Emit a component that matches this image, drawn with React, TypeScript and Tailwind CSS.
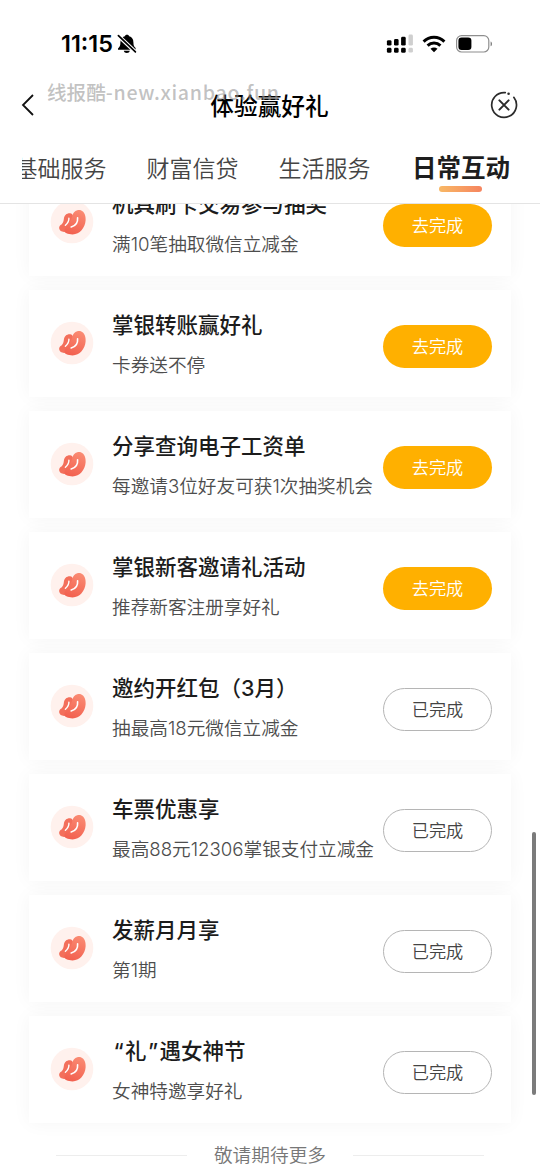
import clsx from "clsx";

const TABS = ["基础服务", "财富信贷", "生活服务"];

const TASKS = [
  { title: "机具刷卡交易参与抽奖", desc: "满10笔抽取微信立减金", done: false },
  { title: "掌银转账赢好礼", desc: "卡券送不停", done: false },
  { title: "分享查询电子工资单", desc: "每邀请3位好友可获1次抽奖机会", done: false },
  { title: "掌银新客邀请礼活动", desc: "推荐新客注册享好礼", done: false },
  { title: "邀约开红包（3月）", desc: "抽最高18元微信立减金", done: true },
  { title: "车票优惠享", desc: "最高88元12306掌银支付立减金", done: true },
  { title: "发薪月月享", desc: "第1期", done: true },
  { title: "“礼”遇女神节", desc: "女神特邀享好礼", done: true },
];

const BellOff = () => (
  <svg width="20" height="20" viewBox="0 0 20 20" className="ml-1">
    <path
      d="M10 0.8C11.2 0.8 12 1.4 12.2 2.3C15 3.1 16.4 5.3 16.4 8.2C16.4 11.7 17.2 12.7 18.6 14V15.8H1V14.4C2.8 12.7 3.4 11.7 3.4 8.2C3.4 5.3 5 3.1 7.8 2.3C8 1.4 8.8 0.8 10 0.8Z"
      fill="#000"
    />
    <path d="M6.8 16.8H12.8C12.4 18.4 11.4 19 9.8 19C8.2 19 7.2 18.4 6.8 16.8Z" fill="#000" />
    <path d="M0 0.6L20 19.4" stroke="#fff" strokeWidth="4" />
    <path d="M1.4 1.6L18.4 17.8" stroke="#000" strokeWidth="1.7" strokeLinecap="round" />
  </svg>
);

const Signal = () => (
  <svg width="28" height="20" viewBox="0 0 28 20">
    <g fill="#000">
      <rect x="0.9" y="6.2" width="4.6" height="5.4" rx="1.4" />
      <rect x="8" y="5" width="4.6" height="6.6" rx="1.4" />
      <rect x="15.1" y="2.8" width="4.6" height="8.8" rx="1.4" />
      <rect x="0.9" y="13.8" width="4.6" height="5" rx="1.4" />
      <rect x="8" y="13.8" width="4.6" height="5" rx="1.4" />
      <rect x="15.1" y="13.8" width="4.6" height="5" rx="1.4" />
    </g>
    <g fill="#cfcfcf">
      <rect x="22.5" y="0.6" width="4.4" height="11" rx="1.4" />
      <rect x="22.5" y="13.8" width="4.4" height="4.8" rx="1.4" />
    </g>
  </svg>
);

const Wifi = () => (
  <svg width="24" height="18" viewBox="0 0 24 18">
    <g fill="none" stroke="#000" strokeWidth="3">
      <path d="M1.6 6.6C7.4 0.9 16.6 0.9 22.4 6.6" />
      <path d="M5.6 10.7C9.2 7.2 14.8 7.2 18.4 10.7" />
    </g>
    <path d="M12 17.2L8.5 13.8C10.5 12 13.5 12 15.5 13.8Z" fill="#000" />
  </svg>
);

const Battery = () => (
  <svg width="37" height="18" viewBox="0 0 37 18">
    <rect x="0.6" y="0.6" width="32.2" height="16.4" rx="5" fill="none" stroke="#8e8e8e" strokeWidth="1.2" />
    <rect x="2.4" y="2.6" width="13" height="12.4" rx="3.2" fill="#000" />
    <path d="M34.6 6.4C36.4 7 36.4 10.6 34.6 11.2Z" fill="#777" />
  </svg>
);

const CloseIcon = () => (
  <svg width="28" height="28" viewBox="0 0 28 28" fill="none" stroke="#2b2b2b" strokeLinecap="round">
    <path d="M14.6 1.6A12.4 12.4 0 1 0 23.4 5.8" strokeWidth="1.7" transform="rotate(3 14 14)" />
    <path d="M9.4 9.4L18.6 18.6M18.6 9.4L9.4 18.6" strokeWidth="2" />
    <circle cx="18.6" cy="2.8" r="1.3" fill="#2b2b2b" stroke="none" />
  </svg>
);

const TaskIcon = () => (
  <svg width="44" height="44" viewBox="0 0 44 44" className="shrink-0">
    <defs>
      <linearGradient id="petal" x1="0.6" y1="0" x2="0.3" y2="1">
        <stop offset="0" stopColor="#fa8a72" />
        <stop offset="1" stopColor="#f2604f" />
      </linearGradient>
    </defs>
    <circle cx="22" cy="22" r="21.3" fill="#fff1ed" />
    <path
      d="M9.2 28.6C8.8 26.4 10 25.2 11.8 24.2C13.2 23 13.6 21 13.9 18.6C14.2 15 17.4 12.6 21 13.4C23 14 24 17 23 21C22 26 20 30 16.5 31.6C12.5 32.6 9.6 31.2 9.2 28.6Z"
      fill="#f36f5b"
    />
    <path
      d="M22.4 15.6C23.4 11.4 27.2 9.2 30.8 10.2C34.6 11.6 36 16 35.6 20.6C35 28 29.8 34.4 22.6 34.4C18 34.4 13.8 33.2 14.4 29.8C15.4 26.6 21.4 22 22.4 15.6Z"
      fill="url(#petal)"
    />
    <path d="M27.6 17.8C28 22.4 25.4 25.8 21.2 27" fill="none" stroke="#fff" strokeWidth="1.6" strokeLinecap="round" />
    <path d="M18.9 18.3C19 21 17.6 23.4 15.4 25.2" fill="none" stroke="#fff" strokeWidth="1.4" strokeLinecap="round" />
  </svg>
);

const TaskCard = ({ title, desc, done }: { title: string; desc: string; done: boolean }) => (
  <div className="flex h-[106.5px] shrink-0 items-center bg-white pl-[21px] pr-[19px] shadow-[0_0_18px_rgba(0,0,0,0.045)]">
    <TaskIcon />
    <div className="ml-[18px] flex-1 whitespace-nowrap pt-[3px] font-[Inter,'Noto_Sans_CJK_SC',sans-serif]">
      <h3 className="text-[21.5px] font-medium leading-[40px] text-[#1c1c1c]">
        {title.split(/([“”])/).map((part, index) =>
          part === "“" || part === "”" ? (
            <span key={index} className="px-[1.4px]">
              {part}
            </span>
          ) : (
            part
          )
        )}
      </h3>
      <p className="text-[18.65px] font-[350] leading-[40px] text-[#4d4d4d]">{desc}</p>
    </div>
    <button
      className={clsx(
        "mt-[6px] h-[43.5px] w-[109px] shrink-0 rounded-full pb-px text-[17.2px] font-[350]",
        done ? "border border-[#b5b5b5] text-[#444]" : "bg-[#ffb000] text-white"
      )}
    >
      {done ? "已完成" : "去完成"}
    </button>
  </div>
);

const App = () => {
  return (
    <div className="relative flex h-[1174px] w-[540px] flex-col overflow-hidden bg-white font-['Noto_Sans_CJK_SC',sans-serif]">
      <header className="shrink-0">
        <div className="flex h-[88px] items-center justify-between pl-[61px] pr-[47px]">
          <div className="flex items-center">
            <span className="font-[Inter,sans-serif] text-[23.4px] font-semibold leading-none text-black">11:15</span>
            <BellOff />
          </div>
          <div className="flex items-center">
            <Signal />
            <div className="ml-2 mr-2.5">
              <Wifi />
            </div>
            <Battery />
          </div>
        </div>

        <div className="flex h-[34px] items-center justify-between pl-[21px] pr-[22px]">
          <svg width="14" height="22" viewBox="0 0 14 22" fill="none" stroke="#111" strokeWidth="1.8">
            <path d="M12 1L2 11L12 21" />
          </svg>
          <h1 className="ml-[14px] pt-px text-[23.7px] font-medium leading-none text-black">体验赢好礼</h1>
          <CloseIcon />
        </div>

        <div className="ml-[22px] flex h-[81px] items-center justify-end overflow-hidden whitespace-nowrap pr-[30px] pt-[9px] text-[23px] font-[350] leading-none text-[#444]">
          {TABS.map((tab) => (
            <span key={tab} className="mr-10 last-of-type:mr-0">
              {tab}
            </span>
          ))}
          <span className="relative ml-[1.5px] text-[24.5px] font-bold text-[#1e1e1e]">
            日常互动
            <i className="absolute -bottom-[13px] left-[27px] h-1.5 w-[43px] rounded-full bg-linear-to-r from-[#f8b865] to-[#f5845f]" />
          </span>
        </div>
        <div className="h-px bg-[#e4e4e4]" />
      </header>

      <main className="min-h-0 flex-1 overflow-hidden">
        <div className="-mt-[35px] flex flex-col gap-[14.5px] pl-[29px] pr-[29px]">
          {TASKS.map((task) => (
            <TaskCard key={task.title} {...task} />
          ))}
        </div>
        <div className="mt-[16px] flex items-center justify-center gap-[27px] text-[18.7px] font-[350] leading-[30px] text-[#777]">
          <span className="h-px w-[131px] translate-y-0.5 bg-[#ededed]" />
          敬请期待更多
          <span className="h-px w-[131px] translate-y-0.5 bg-[#ededed]" />
        </div>
      </main>

      <span className="absolute left-[47px] top-[80px] whitespace-nowrap text-[19.6px] font-medium leading-6 text-[#999]/60">
        线报酷<span className="tracking-[0.7px]">-new.xianbao.fun</span>
      </span>
      <i className="absolute right-1 top-[832px] h-[263px] w-1 rounded-full bg-[#7b7b7b]" />
    </div>
  );
};

export default App;
